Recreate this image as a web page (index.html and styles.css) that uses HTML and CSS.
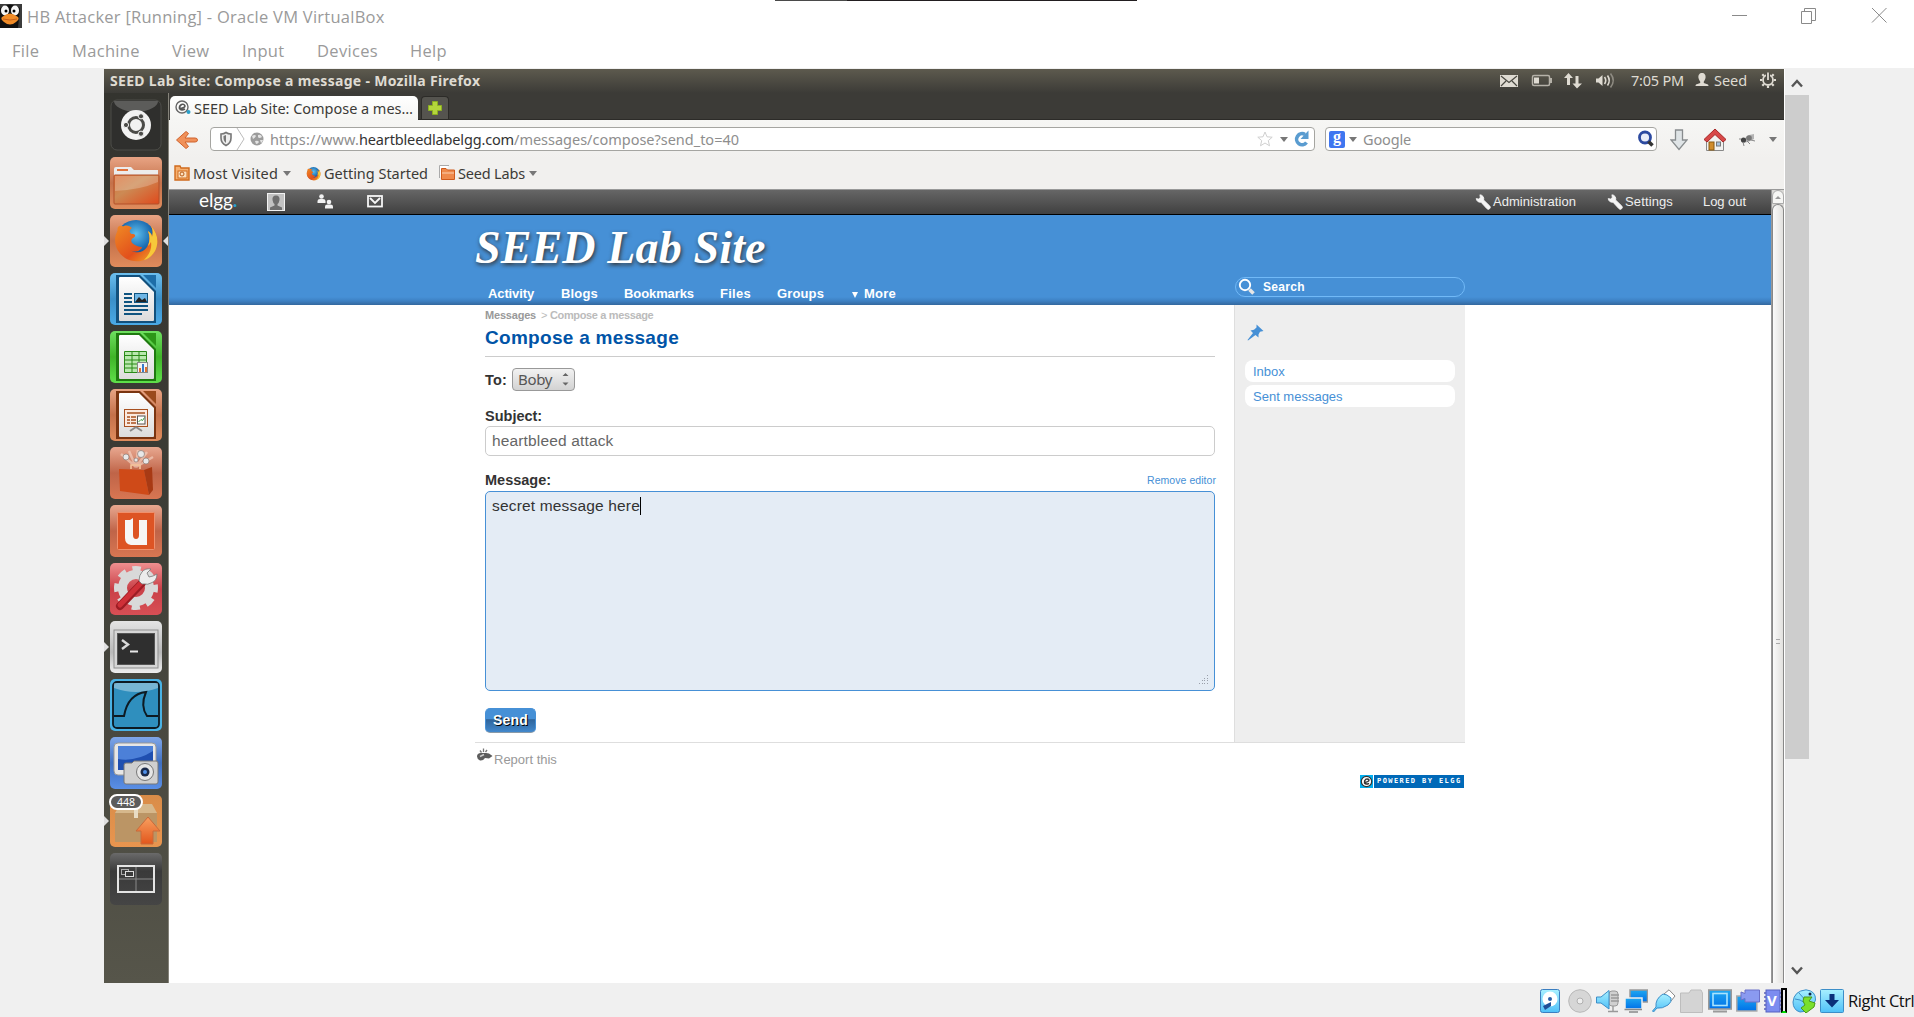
FILE: index.html
```html
<!DOCTYPE html>
<html lang="en">
<head>
<meta charset="utf-8">
<title>HB Attacker [Running] - Oracle VM VirtualBox</title>
<link rel="stylesheet" href="styles.css">
</head>
<body>
<svg class="defs" width="0" height="0">
  <defs>
    <linearGradient id="gOrange" x1="0" y1="0" x2="0" y2="1"><stop offset="0" stop-color="#e8a484"/><stop offset=".5" stop-color="#c4714a"/><stop offset="1" stop-color="#e08c5c"/></linearGradient>
    <linearGradient id="gRed" x1="0" y1="0" x2="0" y2="1"><stop offset="0" stop-color="#e8a890"/><stop offset=".5" stop-color="#bf6448"/><stop offset="1" stop-color="#d87652"/></linearGradient>
    <linearGradient id="gBlue" x1="0" y1="0" x2="0" y2="1"><stop offset="0" stop-color="#6cbfee"/><stop offset=".5" stop-color="#3a8fc8"/><stop offset="1" stop-color="#4aaae6"/></linearGradient>
    <linearGradient id="gGreen" x1="0" y1="0" x2="0" y2="1"><stop offset="0" stop-color="#6ee060"/><stop offset=".5" stop-color="#3fb428"/><stop offset="1" stop-color="#5fe04a"/></linearGradient>
    <linearGradient id="gPink" x1="0" y1="0" x2="0" y2="1"><stop offset="0" stop-color="#ef8f8f"/><stop offset=".5" stop-color="#c94048"/><stop offset="1" stop-color="#d84f55"/></linearGradient>
    <linearGradient id="gGrey" x1="0" y1="0" x2="0" y2="1"><stop offset="0" stop-color="#e4e4e4"/><stop offset=".6" stop-color="#b9b9b9"/><stop offset="1" stop-color="#eeeeee"/></linearGradient>
    <linearGradient id="gDark" x1="0" y1="0" x2="0" y2="1"><stop offset="0" stop-color="#6a6a6a"/><stop offset=".35" stop-color="#3a3a3a"/><stop offset="1" stop-color="#454545"/></linearGradient>
    <linearGradient id="gRoyal" x1="0" y1="0" x2="0" y2="1"><stop offset="0" stop-color="#7fa6e8"/><stop offset=".5" stop-color="#3f6fc0"/><stop offset="1" stop-color="#5a8fe6"/></linearGradient>
    <linearGradient id="gTan" x1="0" y1="0" x2="0" y2="1"><stop offset="0" stop-color="#d98c48"/><stop offset="1" stop-color="#e8954f"/></linearGradient>
    <linearGradient id="gPaper" x1="0" y1="0" x2="0" y2="1"><stop offset="0" stop-color="#ffffff"/><stop offset="1" stop-color="#dcdcdc"/></linearGradient>
    <linearGradient id="gFolder" x1="0" y1="0" x2="1" y2="1"><stop offset="0" stop-color="#dc7038"/><stop offset=".4" stop-color="#cc8a54"/><stop offset="1" stop-color="#e04a1c"/></linearGradient>
    <radialGradient id="gGlobe" cx=".5" cy=".35" r=".6"><stop offset="0" stop-color="#5fc0ee"/><stop offset=".6" stop-color="#1f70b4"/><stop offset="1" stop-color="#123c78"/></radialGradient>
    <linearGradient id="gFox" x1="0" y1="0" x2="1" y2="1"><stop offset="0" stop-color="#f08a24"/><stop offset=".6" stop-color="#e2501c"/><stop offset="1" stop-color="#f6b02a"/></linearGradient>
    <linearGradient id="gSky" x1="0" y1="0" x2="0" y2="1"><stop offset="0" stop-color="#a8f0ff"/><stop offset="1" stop-color="#4fc0f8"/></linearGradient>
    <linearGradient id="gScreen" x1="0" y1="0" x2="0" y2="1"><stop offset="0" stop-color="#1fa8f0"/><stop offset="1" stop-color="#0070e8"/></linearGradient>
    <linearGradient id="gArrow" x1="0" y1="0" x2="0" y2="1"><stop offset="0" stop-color="#f8a060"/><stop offset="1" stop-color="#e2561c"/></linearGradient>
    <symbol id="fox" viewBox="0 0 46 46">
      <circle cx="23" cy="23" r="20" fill="url(#gGlobe)"/>
      <path d="M5 10C8 7 9 10 11 9C14 8 17 9 19 11C16 13 16 16 19 17C23 17 23 19 20 21C17 23 18 26 22 28C27 31 31 29 28 32C23 37 15 34 13 27C17 37 29 38 34 30C37 25 37 20 35 14C38 16 39 18 39 20C40 16 40 13 38 9C45 16 46 26 42 34C36 45 22 47 12 41C2 34 0 23 4 15C5 13 4 12 5 10Z" fill="url(#gFox)"/>
      <path d="M38 9C45 16 46 26 42 34C39 39 35 42 31 43C37 37 39 31 38 25C37 27 36 28 35 29C37 24 37 19 35 14C38 16 39 18 39 20C40 16 40 13 38 9Z" fill="#f7c83a"/>
    </symbol>
    <symbol id="doc" viewBox="0 0 52 52">
      <path d="M9 5Q9 4 10 4H29L44 19V47Q44 48 43 48H10Q9 48 9 47Z" fill="url(#gPaper)"/>
    </symbol>
    <symbol id="wrench" viewBox="0 0 16 16"><path d="M1.200 4.600A4 4 0 0 0 6 8.200L11.800 14.600A1.900 1.900 0 0 0 14.800 12L8.600 6A4 4 0 0 0 4.900 .8L5.300 3.600L3.600 5Z" fill="#f4f4f4" stroke="#f4f4f4" stroke-width=".8"/></symbol>
  </defs>
</svg>

<div class="host">
  <div class="topline"><i></i></div>
  <header class="titlebar">
    <svg class="tux" width="22" height="24" viewBox="0 0 22 24"><rect width="22" height="24" fill="#3b3b3b"/><path d="M0 4Q10 -3 20 4L18 24H0Z" fill="#111"/><ellipse cx="5" cy="6.500" rx="4" ry="5" fill="#f6f6f6"/><ellipse cx="15" cy="6.500" rx="4" ry="5" fill="#f6f6f6"/><circle cx="6" cy="7" r="1.500"/><circle cx="14" cy="7" r="1.500"/><path d="M2 13Q10 6 18 13Q20 15 16 18Q10 23 4 18Q0 15 2 13Z" fill="#f08c28"/><path d="M3 15Q10 17 17 15" stroke="#c9601a" fill="none"/></svg>
    <span class="t host-title">HB Attacker [Running] - Oracle VM VirtualBox</span>
    <svg class="winbtns" width="157" height="17" viewBox="0 0 157 17" fill="none" stroke="#8a8a8a"><path d="M1 8.500H16M70.500 4.500H80.500V16.500H70.500ZM73.500 4V1.500H84.500V13.500H81M141 1L155.500 15.500M155.500 1L141 15.500"/></svg>
  </header>
  <nav class="menubar">
    <span class="t m1">File</span><span class="t m2">Machine</span><span class="t m3">View</span><span class="t m4">Input</span><span class="t m5">Devices</span><span class="t m6">Help</span>
  </nav>

  <div class="stage">
    <main class="vm">
      <div class="panel">
        <b class="t wintitle">SEED Lab Site: Compose a message - Mozilla Firefox</b>
        <svg class="tray" width="120" height="20" viewBox="0 0 120 20">
          <rect x="0" y="5" width="18" height="12" fill="#dfdbd2"/><path d="M1 6L9 12.500L17 6M1 16L6 11M17 16L12 11" stroke="#4a4942" stroke-width="1.200" fill="none"/>
          <rect x="32.500" y="5.500" width="17" height="10" rx="1.500" fill="none" stroke="#b5b1a8" stroke-width="1.500"/><rect x="34" y="7.500" width="5" height="6" fill="#dfdbd2"/><path d="M51 8V13" stroke="#b5b1a8" stroke-width="2"/>
          <path d="M68.500 3L73 8H70V15H67V8H64ZM77 18.500L72.500 13.500H75.500V6H78.500V13.500H82Z" fill="#dfdbd2"/>
          <path d="M96 8.500H98.500L102.500 5V16L98.500 12.500H96Z" fill="#dfdbd2"/><path d="M104.500 7Q107 10.500 104.500 14M107.500 5.500Q111 10.500 107.500 15.500" stroke="#dfdbd2" stroke-width="1.600" fill="none"/><path d="M110.500 3.500Q116 10.500 110.500 17.500" stroke="#8f8c83" stroke-width="1.600" fill="none"/>
        </svg>
        <span class="t clock">7:05 PM</span>
        <svg class="person" width="14" height="14" viewBox="0 0 14 14"><path d="M7 0C9.500 0 11 2 10.500 5C10 7 9.300 8 8.800 8.500V10L13 11.500Q13.500 12 13.500 13H.5Q.5 12 1 11.500L5.200 10V8.500C4.700 8 4 7 3.500 5C3 2 4.500 0 7 0Z" fill="#dfdbd2"/></svg>
        <span class="t user">Seed</span>
        <svg class="cog" width="16" height="16" viewBox="0 0 16 16"><circle cx="8" cy="8" r="5" fill="none" stroke="#dfdbd2" stroke-width="1.800"/><path d="M8 14V16M0 8H2M14 8H16M2.300 2.300L4 4M12 12L13.700 13.700M13.700 2.300L12 4M4 12L2.300 13.700" stroke="#dfdbd2" stroke-width="2.200"/><path d="M8 1V8.500" stroke="#4a4942" stroke-width="4"/><path d="M8 .5V8" stroke="#dfdbd2" stroke-width="1.800"/></svg>
      </div>

      <div class="desk">
        <aside class="launcher">
          <svg class="tile" viewBox="0 0 52 52"><rect x="1" y="1" width="50" height="50" rx="6" fill="#2f2f2d" stroke="#4d4d49"/><path d="M4 2H48Q48 10 26 14Q4 10 4 2Z" fill="#8a8a88" opacity=".5"/><circle cx="26" cy="26" r="15" fill="#f2f2f2"/><circle cx="26" cy="26" r="7.500" fill="none" stroke="#4b4b48" stroke-width="3"/><g fill="#4b4b48" stroke="#f2f2f2" stroke-width="1"><circle cx="16" cy="26" r="2.600"/><circle cx="31" cy="17.300" r="2.600"/><circle cx="31" cy="34.700" r="2.600"/></g></svg>
          <svg class="tile" viewBox="0 0 52 52"><rect width="52" height="52" rx="5" fill="url(#gOrange)"/><path d="M4 12Q4 10 6 10H21L24 13H48V22H4Z" fill="#ececec"/><path d="M7 12H18V14H7Z" fill="#e2733c"/><rect x="4" y="18" width="45" height="29" rx="1" fill="url(#gFolder)" stroke="#b3502a"/><path d="M5 19H48V25Q30 33 5 34Z" fill="#fff" opacity=".22"/></svg>
          <svg class="tile" viewBox="0 0 52 52"><rect width="52" height="52" rx="5" fill="url(#gOrange)"/><use href="#fox" x="3" y="2" width="46" height="46"/></svg>
          <svg class="tile" viewBox="0 0 52 52"><rect width="52" height="52" rx="5" fill="url(#gBlue)"/><path d="M6 2H30L46 18V50H6Z" fill="#12507c"/><path d="M33 2H46V15Z" fill="#1d6ea8"/><use href="#doc" width="52" height="52"/><path d="M14 21H22M14 25H22M14 29H22M14 33H38M14 37H38M14 41H32" stroke="#0f5480" stroke-width="2"/><rect x="24.500" y="20.500" width="13" height="9" fill="#6fb6e6" stroke="#0f5480"/><path d="M25 29L29 24L32 27L35 25L37 29Z" fill="#222"/></svg>
          <svg class="tile" viewBox="0 0 52 52"><rect width="52" height="52" rx="5" fill="url(#gGreen)"/><path d="M6 2H30L46 18V50H6Z" fill="#1f7a10"/><path d="M33 2H46V15Z" fill="#2c9618"/><use href="#doc" width="52" height="52"/><path d="M14.500 20.500H36.500V41.500H14.500ZM14.500 24.500H36.500M14.500 29H36.500M14.500 33H36.500M14.500 37H36.500M22 20.500V41.500M29 20.500V41.500" stroke="#2a8a18" fill="#b9e8ae"/><rect x="27.500" y="31.500" width="10" height="10" fill="#f4f4f4" stroke="#888"/><path d="M30 41V37M36 41V36" stroke="#e07030" stroke-width="2"/><path d="M33 41V33" stroke="#3a7ac8" stroke-width="2"/></svg>
          <svg class="tile" viewBox="0 0 52 52"><rect width="52" height="52" rx="5" fill="url(#gOrange)"/><path d="M6 2H30L46 18V50H6Z" fill="#7a3410"/><path d="M33 2H46V15Z" fill="#9a4a1c"/><use href="#doc" width="52" height="52"/><rect x="14.500" y="20.500" width="23" height="17" fill="#fbe9df" stroke="#a8501f"/><path d="M17 24H35M17 28H20M17 31H20M17 34H20M21 28H26M21 31H26M21 34H26" stroke="#a8501f" stroke-width="1.700"/><rect x="27.500" y="27" width="7.500" height="8" fill="#fff" stroke="#555"/><path d="M28.500 33L31 30.500L32.500 31.500L34.500 28.500" stroke="#3a9a3a" fill="none"/><path d="M26 38L20 42M26 38L32 42" stroke="#888" stroke-width="2"/></svg>
          <svg class="tile" viewBox="0 0 52 52"><rect width="52" height="52" rx="5" fill="url(#gRed)"/><path d="M26 20L11 7M26 20L19 4M26 20L28 3M26 20L37 5M26 20L43 10" stroke="#f8d8c8" stroke-width="2.500" opacity=".6"/><g fill="#e8e8e8" stroke="#8a7a74" stroke-width=".7"><circle cx="16" cy="10" r="3"/><circle cx="31" cy="7" r="3.500"/><circle cx="36" cy="14" r="3"/><circle cx="26" cy="13" r="2"/></g><path d="M21 22V18H30V22" stroke="#f4c49a" stroke-width="1.600" fill="none"/><path d="M9 22L34 23L39 48L10 44Z" fill="#cf4a18"/><path d="M34 23L42 20L43 43L39 48Z" fill="#a83a14"/></svg>
          <svg class="tile" viewBox="0 0 52 52"><rect width="52" height="52" rx="5" fill="url(#gRed)"/><rect x="7.500" y="7.500" width="37" height="37" rx="1" fill="#dd5424" stroke="#f0906c"/><path d="M15 15H20L23 13V30Q23 34 26 34Q29 34 29 30V15H37V40H21Q15 39 15 33Z" fill="#f6f6f6"/></svg>
          <svg class="tile" viewBox="0 0 52 52"><rect width="52" height="52" rx="5" fill="url(#gPink)"/><circle cx="26" cy="25" r="13.500" fill="none" stroke="#d9d9d9" stroke-width="9"/><circle cx="26" cy="25" r="18.500" fill="none" stroke="#d9d9d9" stroke-width="7" stroke-dasharray="8 6.530" stroke-dashoffset="4"/><path d="M10 43L32 20" stroke="#9c1c24" stroke-width="8" stroke-linecap="round"/><path d="M10 42L31 20" stroke="#cf3038" stroke-width="5" stroke-linecap="round"/><path d="M32 21L29 18Q29 12 32 9Q35 5 41 6L37 10L39 14L43 13L47 11Q47 18 41 20Q37 22 35 21Z" fill="#ececec" stroke="#777" stroke-width=".8"/></svg>
          <svg class="tile" viewBox="0 0 52 52"><rect width="52" height="52" rx="5" fill="url(#gGrey)"/><rect x="4" y="9" width="44" height="38" fill="#d6d6d6" stroke="#8f8f8f"/><rect x="7.500" y="12.500" width="37" height="31" fill="#2f2f2f" stroke="#555"/><path d="M12 19L18 23.500L12 28" stroke="#d8d8d8" stroke-width="2.400" fill="none"/><path d="M20 30.500H28" stroke="#e8e8e8" stroke-width="2"/></svg>
          <svg class="tile" viewBox="0 0 52 52"><rect width="52" height="52" rx="5" fill="#49b2e4"/><rect x="3" y="3" width="46" height="46" rx="4" fill="#2f8fbe" stroke="#0d1a22" stroke-width="1.800"/><path d="M4 4H48V9Q26 17 4 9Z" fill="#fff" opacity=".35"/><path d="M4 37H14Q18 15 36 13Q30 27 37 37H48" stroke="#0d1a22" stroke-width="2" fill="none"/></svg>
          <svg class="tile" viewBox="0 0 52 52"><rect width="52" height="52" rx="5" fill="url(#gRoyal)"/><rect x="4" y="6" width="42" height="32" rx="4" fill="#e6e6e6" stroke="#999"/><rect x="8" y="9" width="35" height="24" fill="#1f4fb0"/><path d="M8 9H43V14Q26 25 8 22Z" fill="#5f96ea" opacity=".7"/><path d="M14 28Q14 26 16 26H22L24 24H46Q48 24 48 26V45Q48 47 46 47H16Q14 47 14 45Z" fill="#cfcfcf" stroke="#777"/><circle cx="35" cy="35" r="8.500" fill="#e6e6e6" stroke="#777"/><circle cx="35" cy="35" r="4.500" fill="#1b2a4a"/><circle cx="35" cy="35" r="2" fill="#4f8fe8"/></svg>
          <div class="tilebox"><svg class="tile" viewBox="0 0 52 52"><rect width="52" height="52" rx="5" fill="url(#gTan)"/><path d="M10 9H42L47 18H5Z" fill="#d6b88c"/><rect x="5" y="18" width="42" height="29" fill="#bb9565"/><rect x="24" y="9" width="4" height="14" fill="#e8dcc4"/><path d="M38 22L50 36H43V49H31V36H26Z" fill="url(#gArrow)" stroke="#c96a3a"/></svg><span class="count">448</span></div>
          <svg class="tile" viewBox="0 0 52 52"><rect width="52" height="52" rx="5" fill="url(#gDark)"/><rect x="8" y="13" width="36" height="26" fill="none" stroke="#e4e4e4" stroke-width="2"/><path d="M26 14V38M9 26H43" stroke="#8a8a8a"/><rect x="11.500" y="16.500" width="7" height="5" fill="none" stroke="#aaa"/><rect x="15.500" y="18.500" width="8" height="5" fill="#3a3a3a" stroke="#ddd"/></svg>
          <i class="pip p1"></i><i class="pip p2"></i><i class="pip p3"></i><i class="pip right"></i>
        </aside>

        <section class="browser">
          <div class="tabs">
            <div class="tab">
              <svg width="16" height="16" viewBox="0 0 16 16"><circle cx="7" cy="7" r="6" fill="none" stroke="#666" stroke-width="1.400"/><path d="M4 8.500Q10 8 10 6Q9 3.500 6.500 4.500Q4 6 4.500 8.500Q6 11 10 9" stroke="#555" stroke-width="1.600" fill="none"/><circle cx="13.500" cy="12" r="2" fill="#2a9fc8"/></svg>
              <span class="t tabtext">SEED Lab Site: Compose a mes…</span>
            </div>
            <div class="newtab"><svg width="14" height="14" viewBox="0 0 14 14"><path d="M4.500 .5H9.500V4.500H13.500V9.500H9.500V13.500H4.500V9.500H.5V4.500H4.500Z" fill="#b4d63c" stroke="#8cb020"/></svg></div>
          </div>

          <div class="navbar">
            <svg class="back" width="24" height="20" viewBox="0 0 24 20"><path d="M11 1.500L1.500 10L11 18.500L13.500 16.500L10 12H20Q22.500 12 22.500 10Q22.500 8 20 8H10L13.500 3.500Z" fill="#f0915a" stroke="#d0622c"/></svg>
            <div class="url">
              <svg class="shield" width="34" height="24" viewBox="0 0 34 24"><path d="M15 5.500Q17 7 20 7V11Q20 16 15 18.500Q10 16 10 11V7Q13 7 15 5.500Z" fill="#eee" stroke="#777" stroke-width="1.600"/><path d="M15 8V16Q12 14 12.500 9Z" fill="#777"/><path d="M26 1L33 12L26 23" stroke="#bbb" fill="none"/></svg>
              <svg class="globe" width="14" height="14" viewBox="0 0 14 14"><circle cx="7" cy="7" r="6.500" fill="#9c9c9c"/><path d="M2 4Q5 2 6 4Q5 6 3 7ZM8 3Q11 2 12 5Q9 7 8 5ZM5 9Q8 8 9 10Q8 12 6 12ZM10 8L13 8Q12 11 11 11Z" fill="#e4e4e4"/></svg>
              <span class="t u1">https://www.</span><span class="t u2">heartbleedlabelgg.com</span><span class="t u3">/messages/compose?send_to=40</span>
              <svg class="star" width="16" height="16" viewBox="0 0 16 16"><path d="M8 1L10 5.800L15.200 6.200L11.300 9.600L12.500 14.800L8 12L3.500 14.800L4.700 9.600L.8 6.200L6 5.800Z" fill="#fff" stroke="#d0d0d0"/></svg>
              <i class="drop"></i>
              <svg class="reload" width="16" height="18" viewBox="0 0 16 18"><path d="M12 4.500A5.500 5.500 0 1 0 13.500 12.500" stroke="#5a9cd0" stroke-width="3.600" fill="none"/><path d="M15.500 .5V9H7.500Z" fill="#5a9cd0"/></svg>
            </div>
            <div class="search">
              <span class="g">g</span><i class="drop"></i><span class="t gtext">Google</span>
              <svg class="mag" width="18" height="18" viewBox="0 0 18 18"><circle cx="8" cy="7.500" r="5.500" fill="#e9edf8" stroke="#2c4aa0" stroke-width="2.800"/><path d="M11.500 11.500L15.500 15.500" stroke="#333" stroke-width="3.600"/></svg>
            </div>
            <svg class="down" width="18" height="22" viewBox="0 0 18 22"><path d="M5.500 1H12.500V11H17L9 20.500L1 11H5.500Z" fill="#dfe4e6" stroke="#888c8e" stroke-width="1.300"/></svg>
            <svg class="home" width="24" height="24" viewBox="0 0 24 24"><path d="M3.500 11V22.500H20.500V11L12 4Z" fill="#f2f2f0" stroke="#888"/><rect x="6" y="14" width="5" height="8" fill="#d08c2c" stroke="#8a5a10"/><rect x="13.500" y="14" width="4" height="4" fill="#a8c4e0" stroke="#777"/><path d="M12 1L23 11.500L20 14L12 6.500L4 14L1 11.500Z" fill="#d84848" stroke="#a82828"/></svg>
            <svg class="bug" width="17" height="16" viewBox="0 0 17 16"><path d="M3 11L6 6L10 3L15 2L15 7L9 10Z" fill="#b4b4b4"/><circle cx="4.500" cy="8" r="2.600" fill="#444"/><circle cx="10" cy="6" r="2.800" fill="#777"/><path d="M4 10L5 14M8 9L11 12M2 7L0 7M12 8L16 9" stroke="#888"/></svg>
            <i class="drop"></i>
          </div>

          <div class="bookmarks">
            <svg width="16" height="16" viewBox="0 0 16 16"><path d="M1 1H6L7 3H15V15H1Z" fill="#f6b070" stroke="#cf6a1c" stroke-width="1.400"/><rect x="4" y="6" width="9" height="7" fill="#fbe0c0" stroke="#cf6a1c"/><circle cx="8" cy="9" r="2" fill="none" stroke="#b85a14"/></svg>
            <span class="t b1">Most Visited</span><i class="drop"></i>
            <svg class="bfox" width="15" height="15" viewBox="0 0 46 46"><use href="#fox" width="46" height="46"/></svg>
            <span class="t b2">Getting Started</span>
            <svg class="bfold" width="16" height="16" viewBox="0 0 16 16"><path d="M.5 13V.5H10" fill="#fff" stroke="#aaa"/><path d="M2.500 3.500H7L8.500 5H15.500V14.500H2.500Z" fill="#ef8a4c" stroke="#cf5a1c"/><path d="M3 8H15" stroke="#fbd0b0"/></svg>
            <span class="t b3">Seed Labs</span><i class="drop"></i>
          </div>

          <div class="view">
            <div class="web">
              <div class="elggbar">
                <span class="t elgg">elgg<em>.</em></span>
                <svg class="avatar" width="18" height="18" viewBox="0 0 18 18"><rect x=".5" y=".5" width="17" height="17" fill="#c2c2c2" stroke="#f2f2f2"/><path d="M9 2.500Q13 2.500 12.500 7Q12 10 10.500 11V12.500L15 14.500V17H3V14.500L7.500 12.500V11Q6 10 5.500 7Q5 2.500 9 2.500Z" fill="#6e6e6e"/></svg>
                <svg class="friends" width="17" height="16" viewBox="0 0 17 16" fill="#f2f2f2"><circle cx="4.500" cy="2.500" r="2.300"/><path d="M.5 9V7Q.5 5 3 5H6Q8.500 5 8.500 7V9Z"/><circle cx="12" cy="8" r="2.300"/><path d="M8 14.500V12.500Q8 10.500 10.500 10.500H13.500Q16 10.500 16 12.500V14.500Z"/></svg>
                <svg class="mail" width="16" height="13" viewBox="0 0 16 13"><rect x="1" y="1" width="14" height="10.500" fill="none" stroke="#f6f6f6" stroke-width="1.800"/><path d="M3 3L8 8L13 3" stroke="#f6f6f6" stroke-width="1.800" fill="none"/></svg>
                <svg class="wr" width="16" height="16"><use href="#wrench" width="16" height="16"/></svg><span class="t e1">Administration</span>
                <svg class="wr w2" width="16" height="16"><use href="#wrench" width="16" height="16"/></svg><span class="t e2">Settings</span>
                <span class="t e3">Log out</span>
              </div>
              <div class="hero">
                <div class="wrap">
                  <h1 class="t sitename">SEED Lab Site</h1>
                  <div class="herorow">
                    <b class="t n1">Activity</b><b class="t n2">Blogs</b><b class="t n3">Bookmarks</b><b class="t n4">Files</b><b class="t n5">Groups</b><i class="tri"></i><b class="t n6">More</b>
                    <div class="sitesearch"><svg width="18" height="18" viewBox="0 0 18 18"><circle cx="7" cy="7" r="5.200" fill="none" stroke="#fff" stroke-width="1.900"/><path d="M11.500 11.500L15.500 15.500" stroke="#e6e6e6" stroke-width="3.600"/></svg><b class="t ss">Search</b></div>
                  </div>
                </div>
              </div>
              <div class="wrap page">
                <form class="main">
                  <div class="crumbs"><b class="t c1">Messages</b><span class="gt">&gt;</span><b class="t c2">Compose a message</b></div>
                  <h2><span class="t h2t">Compose a message</span></h2>
                  <div class="to"><b class="t l1">To:</b><div class="select"><span class="t boby">Boby</span><svg width="7" height="13" viewBox="0 0 7 13" fill="#666"><path d="M3.500 0L6.500 3H.5ZM3.500 12.500L6.500 9.500H.5Z"/></svg></div></div>
                  <div class="lab lab1"><b class="t l2">Subject:</b></div>
                  <div class="input"><span class="t it">heartbleed attack</span></div>
                  <div class="lab lab2"><b class="t l3">Message:</b><span class="t rem">Remove editor</span></div>
                  <div class="area"><span class="t at">secret message here</span><i class="caret"></i><svg class="grip" width="10" height="10" viewBox="0 0 10 10" fill="#9aa0aa"><path d="M8 0h1v1h-1zM5 3h1v1h-1zM8 3h1v1h-1zM3 5h1v1h-1zM5 5h1v1h-1zM8 5h1v1h-1zM0 8h1v1h-1zM3 8h1v1h-1zM5 8h1v1h-1zM8 8h1v1h-1z"/></svg></div>
                  <div class="send"><b class="t sendt">Send</b></div>
                </form>
                <div class="side">
                  <svg class="pin" width="17" height="17" viewBox="0 0 17 17" fill="#4690d6"><path d="M9.500 .5L16.500 7L13 7.800L11.500 10.500L11.500 13.500L8.500 11L1 16.500L.5 16L6 9L3.500 6.500L7 5.800L9.500 3.500Z"/></svg>
                  <div class="pill"><span class="t s1">Inbox</span></div>
                  <div class="pill"><span class="t s2">Sent messages</span></div>
                </div>
              </div>
              <div class="wrap foot">
                <div class="report"><svg width="16" height="14" viewBox="0 0 16 14"><path d="M0 8.500Q0 5 4 5L9 5L12 5.500L15.500 8L12 10.500L8 10Q6 13 3 12.500Q0 11 0 8.500Z" fill="#5c5c5c"/><path d="M3 2.500L4.500 4.500M6.500 .5V4M10 2L8.500 4" stroke="#777" stroke-width="1.300"/><path d="M3 8.500L7 6.500" stroke="#ccc" stroke-width="1.500"/></svg><span class="t rt">Report this</span></div>
                <div class="badge"><svg width="13" height="13" viewBox="0 0 13 13"><rect width="13" height="13" fill="#00aeef"/><circle cx="6.500" cy="6.500" r="5.200" fill="#fff" stroke="#333" stroke-width="1.200"/><path d="M4 7.500Q9 7 9 5Q8 3.500 6 4.200Q4 5.500 4.500 8Q6 10 9 8.300" stroke="#333" stroke-width="1.400" fill="none"/></svg><span><b class="t pw">POWERED BY ELGG</b></span></div>
              </div>
            </div>
            <div class="vscroll"><div class="vup"><i></i></div><div class="vthumb"><i></i></div></div>
          </div>
        </section>
      </div>
    </main>
    <div class="hostscroll">
      <svg width="12" height="9" viewBox="0 0 12 9"><path d="M1 7.500L6 2L11 7.500" stroke="#555" stroke-width="2.400" fill="none"/></svg>
      <div class="hthumb"></div>
      <svg class="hd" width="12" height="9" viewBox="0 0 12 9"><path d="M1 1.500L6 7L11 1.500" stroke="#555" stroke-width="2.400" fill="none"/></svg>
    </div>
  </div>

  <footer class="status">
    <svg class="hdd" viewBox="0 0 24 24"><rect x="2.500" y=".5" width="19" height="23" rx="2" fill="url(#gSky)" stroke="#3c7ec0"/><circle cx="12" cy="10" r="7.500" fill="#fff"/><circle cx="12" cy="10" r="2" fill="#2a5fa8"/><path d="M13 13L5 17L7 21L13 17Z" fill="#1f4f98"/></svg>
    <svg viewBox="0 0 24 24"><circle cx="12" cy="12" r="11.300" fill="#d6d6d6" stroke="#b8b8b8"/><circle cx="12" cy="12" r="3" fill="#eee" stroke="#b0b0b0"/></svg>
    <svg viewBox="0 0 24 24"><rect x="13" y="2" width="9" height="15" rx="3" fill="#d0d0d0" stroke="#999"/><path d="M15 6H23M15 9H23M15 12H23M17 17V22M12 22.500H22" stroke="#999" stroke-width="1.400"/><path d="M.5 8H5L13 1.500V20L5 14H.5Z" fill="url(#gSky)" stroke="#3c8ec8"/></svg>
    <svg viewBox="0 0 24 24"><rect x="6" y="1" width="17.500" height="12" fill="url(#gScreen)" stroke="#999" stroke-width="1.500"/><rect x="1" y="9" width="17" height="11" fill="url(#gScreen)" stroke="#eee" stroke-width="1.500"/><path d="M.5 20.500H18M5 23H14" stroke="#888" stroke-width="1.500"/></svg>
    <svg viewBox="0 0 24 24"><path d="M12 5L17 .8L23 7L19 12Z" fill="#fff" stroke="#888"/><path d="M11 5Q15 5 19 9Q20 13 16 16Q10 20 5 19L1.500 23L.5 22L4 18Q3 10 11 5Z" fill="url(#gSky)" stroke="#3c8ec8"/></svg>
    <svg viewBox="0 0 24 24"><path d="M.5 4H9L11 1H21L22.500 4V23.500H.5Z" fill="#d4d4d4" stroke="#bdbdbd"/></svg>
    <svg viewBox="0 0 24 24"><rect x=".8" y="1" width="22.400" height="19" fill="url(#gScreen)" stroke="#999" stroke-width="1.600"/><rect x="5" y="4.500" width="14" height="12" fill="none" stroke="#a8e4ff" stroke-width="1.600"/><path d="M5 22.500H19" stroke="#999" stroke-width="2"/></svg>
    <svg viewBox="0 0 24 24"><rect x=".8" y="7" width="20" height="15" fill="url(#gScreen)" stroke="#aaa" stroke-width="1.500"/><path d="M5 3L9 4.500V1H23.500V13H9V9.500L5 11Z" fill="#8a9af0" stroke="#6a70c8"/></svg>
    <div class="cpu"><svg viewBox="0 0 17 24"><path d="M0 4H17M0 8H17M0 12H17M0 16H17M0 20H17" stroke="#5a60b8" stroke-width="1.500"/><rect x="2" y="1" width="14" height="22" fill="#7c8cf0" stroke="#5560c0"/></svg><b>V</b><i></i></div>
    <svg viewBox="0 0 24 24"><path d="M1 13Q2 2 14 .8Q24 2 23.500 11Q20 23 8 23Q1 21 1 13Z" fill="url(#gSky)" stroke="#3c8ec8"/><path d="M7 4Q12 8 13 14M3 10Q8 10 13 14" stroke="#3c8ec8" fill="none"/><path d="M12 8L20 8L17 12L23 14L22 18L14 24L9 19L13 16L11 12Z" fill="#7adf2c" stroke="#4a9a18"/><circle cx="18" cy="5" r="1.500" fill="#124"/></svg>
    <svg viewBox="0 0 24 24"><rect x=".5" y=".5" width="23" height="23" rx="1" fill="url(#gSky)" stroke="#3c8ec8"/><path d="M9.500 5H14.500V11H19L12 18.500L5 11H9.500Z" fill="#0a2f7a"/></svg>
    <span class="t rc">Right Ctrl</span>
  </footer>
</div>
</body>
</html>
```
FILE: styles.css
```css
* { box-sizing: border-box; }
body { margin: 0; font-family: "Liberation Sans", sans-serif; }
h1, h2 { margin: 0; }
svg { display: block; flex: none; }
.defs { position: absolute; }
.t { display: block; flex: none; white-space: nowrap; }

/* host window */
.host { width: 1914px; height: 1017px; overflow: hidden; display: flex; flex-direction: column; background: #f0f0f0; position: relative; }
.topline { position: absolute; left: 775px; top: 0; width: 362px; height: 1px; background: #221e20; }
.topline i { display: block; width: 72px; height: 1px; background: #4a4a4a; }
.titlebar { height: 33px; background: #fff; display: flex; align-items: center; flex: none; }
.tux { margin-right: 5px; margin-top: -1px; }
.host-title, .menubar { font-family: "Open Sans", sans-serif; font-size: 16.5px; color: #9a9a9a; }
.host-title { width: 357px; letter-spacing: .255px; }
.winbtns { margin-left: auto; margin-right: 26px; margin-top: -3px; }
.menubar { height: 35px; line-height: 36px; background: #fff; display: flex; flex: none; padding-left: 12px; letter-spacing: .33px; }
.m1 { width: 60px; } .m2 { width: 100px; } .m3 { width: 70px; } .m4 { width: 75px; } .m5 { width: 93px; } .m6 { width: 40px; }

.stage { height: 915px; padding-top: 1px; padding-left: 104px; display: flex; flex: none; }
.vm { width: 1680px; height: 914px; background: linear-gradient(#5d5a4e, #3c3b37 24px); font-family: "Noto Sans", sans-serif; }
.panel { height: 24px; display: flex; align-items: center; padding: 0 8px 2px 6px; color: #dfdbd2; font-size: 14.5px; }
.wintitle { width: 370px; font-size: 14px; letter-spacing: .31px; }
.tray { margin-left: 1020px; }
.clock { margin-left: 11px; width: 64px; letter-spacing: -.21px; }
.user { margin-left: 5px; width: 46px; letter-spacing: -.06px; }

/* launcher */
.desk { display: flex; height: 890px; }
.launcher { position: relative; width: 65px; padding: 6px 0 0 6px; display: flex; flex-direction: column; gap: 6px; background: linear-gradient(#34342f, #3c3c35 45%, #56554a); border-right: 1px solid #85837a; }
.tile { width: 52px; height: 52px; }
.tilebox { position: relative; width: 52px; height: 52px; }
.count { position: absolute; left: -1px; top: -1px; width: 34px; height: 16px; border: 2px solid #fff; border-radius: 8px; background: #5c5c5c; color: #fff; font-size: 10.5px; line-height: 12px; text-align: center; }
.pip { position: absolute; left: 0; border: 5px solid transparent; border-left-color: #e0e0e0; border-right-width: 0; }
.p1 { top: 143px; } .p2 { top: 549px; } .p3 { top: 723px; }
.pip.right { left: auto; right: 0; top: 143px; border-width: 5px 5px 5px 0; border-right-color: #e0e0e0; }

/* browser chrome */
.browser { width: 1615px; color: #3c3b37; font-size: 14.5px; }
.tabs { height: 27px; display: flex; align-items: flex-end; padding-left: 1px; border-bottom: 1px solid #2c2b28; }
.tab { width: 248px; height: 24px; margin-bottom: -1px; position: relative; background: linear-gradient(#fff, #f5f5f3); border-radius: 5px 5px 0 0; display: flex; align-items: center; padding-left: 5px; }
.tabtext { margin-left: 3px; width: 219px; letter-spacing: -.03px; }
.newtab { margin-left: 3px; width: 28px; height: 23px; border-radius: 4px 4px 0 0; background: #55544f; border: 1px solid #2c2b28; border-bottom: 0; display: flex; align-items: center; justify-content: center; }
.navbar { height: 39px; background: linear-gradient(#f6f6f4, #f1f0ee); display: flex; align-items: center; padding-left: 6px; }
.back { margin-right: 11px; }
.url, .search { height: 24px; margin-top: -1px; border: 1px solid #a5a5a1; border-radius: 4px; background: #fff; display: flex; align-items: center; color: #8e8e8e; }
.url { width: 1105px; }
.globe { margin: 0 6px 0 5px; }
.u1 { width: 89px; letter-spacing: .128px; } .u2 { width: 155px; color: #333; letter-spacing: -.15px; } .u3 { width: 225px; letter-spacing: -.012px; }
.star { margin-left: 518px; margin-right: 7px; }
.drop { width: 0; height: 0; flex: none; border: 4px solid transparent; border-top: 5px solid #777; border-bottom: 0; }
.reload { margin-left: 5px; }
.search { width: 332px; margin-left: 10px; padding-left: 3px; }
.g { width: 16px; height: 17px; margin-right: 4px; background: #3f76f0; color: #fff; font: bold 16px/12px "Liberation Serif", serif; text-align: center; border-radius: 2px; }
.gtext { margin-left: 6px; width: 48px; color: #8e8e8e; letter-spacing: -.156px; }
.mag { margin-left: auto; margin-right: 1px; }
.down { margin-left: 13px; } .home { margin-left: 15px; } .bug { margin-left: 12px; }
.bug + .drop { margin-left: 13px; }
.bookmarks { height: 31px; background: #f1f0ee; border-bottom: 1px solid #999; display: flex; align-items: center; padding: 0 0 2px 5px; }
.b1 { margin-left: 3px; width: 90px; letter-spacing: .138px; }
.bfox { margin-left: 15px; } .b2 { margin-left: 3px; width: 107px; letter-spacing: -.017px; } .bfold { margin-left: 8px; } .b3 { margin-left: 3px; width: 71px; letter-spacing: -.18px; }

/* web page */
.view { height: 793px; display: flex; background: #fff; font-family: "Liberation Sans", sans-serif; }
.web { width: 1602px; }
.elggbar { height: 25px; display: flex; align-items: center; background: linear-gradient(#666, #404040); border-bottom: 1px solid #000; color: #eee; font-size: 13px; padding: 0 0 1px 30px; }
.elgg { width: 38px; font: 19px/20px Lato, sans-serif; margin-top: -3px; color: #fff; letter-spacing: -.1px; }
.elgg em { color: #2aa0d0; font-style: normal; font-weight: bold; }
.avatar { margin-left: 30px; } .friends { margin-left: 32px; } .mail { margin-left: 33px; }
.wr { margin-left: 1092px; margin-right: 2px; }
.w2 { margin-left: 31px; }
.e1 { width: 83px; letter-spacing: .045px; } .e2 { width: 48px; letter-spacing: .127px; } .e3 { width: 43px; margin-left: 30px; letter-spacing: -.054px; }
.hero { height: 90px; background: linear-gradient(#4690d6 82px, #3d80c2 86px, #33689e); color: #fff; }
.wrap { width: 990px; margin-left: 306px; }
.sitename { height: 62px; font: italic bold 46px/66px "Liberation Serif", serif; letter-spacing: .14px; text-shadow: 1px 2px 4px #333; }
.herorow { display: flex; height: 20px; padding-left: 13px; font-size: 13px; line-height: 34px; }
.n1 { width: 73px; letter-spacing: -.12px; } .n2 { width: 63px; letter-spacing: .175px; } .n3 { width: 96px; letter-spacing: -.09px; } .n4 { width: 57px; letter-spacing: .275px; } .n5 { width: 75px; letter-spacing: .128px; } .n6 { width: 32px; margin-left: 6px; letter-spacing: .234px; }
.tri { width: 0; height: 0; margin-top: 15px; border: 3.5px solid transparent; border-top: 6px solid #fff; border-bottom: 0; }
.sitesearch { width: 230px; height: 20px; margin-left: auto; border: 1px solid #71b9f7; border-radius: 10px; display: flex; align-items: center; padding-left: 2px; font-size: 12px; line-height: 18px; }
.ss { margin-left: 7px; letter-spacing: .328px; }
.page { height: 438px; display: flex; border-bottom: 1px solid #dedede; }
.main { width: 759px; padding: 0 19px 0 10px; }
.crumbs { display: flex; height: 22px; line-height: 21px; font-size: 11px; color: #999; }
.gt { margin: 0 3px 0 5px; width: 6px; color: #bbb; }
.c1 { width: 51px; letter-spacing: -.2px; } .c2 { color: #bbb; letter-spacing: -.36px; }
.h2t { line-height: 21px; letter-spacing: .292px; }
h2 { height: 30px; border-bottom: 1px solid #ccc; font-size: 19px; color: #0054a7; }
.to { display: flex; align-items: center; margin-top: 11px; height: 23px; font-size: 14.5px; color: #333; }
.l1 { width: 27px; letter-spacing: .177px; }
.select { width: 63px; height: 23px; border: 1px solid #999; border-radius: 4px; background: linear-gradient(#f2f2f2, #d2d2d2); display: flex; align-items: center; padding: 0 0 1px 5px; font: 15px/20px "Noto Sans", sans-serif; color: #555; }
.boby { width: 44px; margin-top: -1px; letter-spacing: -.35px; }
.lab { display: flex; justify-content: space-between; font-size: 14.5px; color: #333; line-height: 18px; }
.lab1 { margin-top: 16px; height: 19px; }
.input { height: 30px; border: 1px solid #ccc; border-radius: 5px; padding-left: 6px; font-size: 15.5px; line-height: 28px; color: #666; letter-spacing: .15px; }
.lab2 { margin-top: 15px; height: 20px; }
.rem { font-size: 10.5px; color: #4690d6; margin-right: -1px; letter-spacing: .055px; }
.area { position: relative; height: 200px; border: 1px solid #4690d6; border-radius: 5px; background: #e4ecf5; padding: 4px 6px; display: flex; align-items: flex-start; font-size: 15.5px; line-height: 19px; color: #333; }
.at { width: 148px; letter-spacing: .171px; }
.caret { width: 1px; height: 18px; margin-top: 1px; background: #000; }
.grip { position: absolute; right: 5px; bottom: 5px; }
.send { margin-top: 17px; width: 51px; height: 25px; border-radius: 5px; background: linear-gradient(#4690d6 44%, #2f659c 46%, #4288cc); border: 1px solid #4690d6; border-bottom: 1px solid #8a9aa8; color: #fff; padding-left: 7px; font-size: 14px; line-height: 22px; letter-spacing: .19px; text-shadow: 1px 1px 0 #000; }
.side { width: 231px; background: #eee; border-left: 1px solid #dedede; padding: 19px 10px 0; }
.pin { margin: 0 0 19px 2px; }
.pill { height: 22px; margin-bottom: 3px; border-radius: 8px; background: #fff; padding-left: 8px; font-size: 13px; line-height: 23px; color: #4690d6; }
.foot { display: flex; justify-content: space-between; height: 50px; }
.report { display: flex; padding: 5px 0 0 2px; font-size: 13px; line-height: 24px; color: #999; }
.rt { margin-left: 1px; }
.badge { display: flex; gap: 1px; margin: 32px 1px 0 0; height: 13px; }
.badge span { width: 90px; height: 13px; background: #0069b8; color: #fff; font: bold 7px/13px "DejaVu Sans Mono", monospace; padding-left: 3px; letter-spacing: 1.42px; }

/* scrollbars */
.vscroll { width: 13px; background: #d9d8d5; border-left: 1px solid #999; }
.vup { height: 14px; border: 1px solid #aaa; border-radius: 6px 6px 0 0; background: #f6f6f4; display: flex; align-items: center; justify-content: center; }
.vup i { border: 3px solid transparent; border-bottom: 3px solid #999; border-top: 0; }
.vthumb { height: 779px; border: 1px solid #888; border-bottom: 0; border-radius: 6px 6px 0 0; background: linear-gradient(90deg, #fafafa, #e2e1de); padding: 434px 3px 0; }
.vthumb i { display: block; height: 5px; border-top: 1px solid #aaa; border-bottom: 1px solid #aaa; }
.hostscroll { width: 25px; border-left: 1px solid #fff; display: flex; flex-direction: column; align-items: center; padding-top: 10px; }
.hthumb { width: 24px; height: 664px; margin-top: 7px; background: #cdcdcd; }
.hd { margin-top: 207px; }

/* host status bar */
.status { height: 34px; display: flex; align-items: center; gap: 4px; padding: 1px 0 0 1538px; font: 16.5px "Open Sans", sans-serif; color: #111; }
.status > svg { width: 24px; height: 24px; }
.status > .hdd { margin-right: 2px; }
.rc { letter-spacing: -.45px; }
.cpu { position: relative; width: 24px; height: 24px; flex: none; }
.cpu svg { width: 17px; height: 24px; }
.cpu b { position: absolute; left: 3px; top: 3px; font: bold 15px/17px "Open Sans", sans-serif; color: #fff; }
.cpu i { position: absolute; left: 17px; top: -1px; width: 6px; height: 25px; border: 2px solid #000; border-bottom-color: #0d0; }
```
